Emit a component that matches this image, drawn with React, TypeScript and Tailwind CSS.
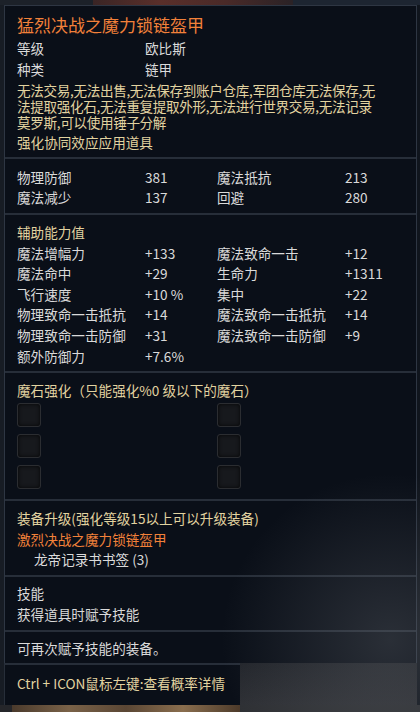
const stats = [
  ['物理防御', '381', '魔法抵抗', '213'],
  ['魔法减少', '137', '回避', '280'],
];

const bonus = [
  ['魔法增幅力', '+133', '魔法致命一击', '+12'],
  ['魔法命中', '+29', '生命力', '+1311'],
  ['飞行速度', '+10 %', '集中', '+22'],
  ['物理致命一击抵抗', '+14', '魔法致命一击抵抗', '+14'],
  ['物理致命一击防御', '+31', '魔法致命一击防御', '+9'],
  ['额外防御力', '+7.6%', '', ''],
];

const Row = ({ cells, lh }: { cells: string[]; lh: string }) => (
  <div className={`grid grid-cols-[128px_72px_128px_1fr] text-[#dadada] ${lh}`}>
    {cells.map((c, i) => (
      <span key={i} className="whitespace-nowrap">
        {c}
      </span>
    ))}
  </div>
);

const Slot = () => (
  <div className="w-6 h-6 rounded-[3px] bg-[#17191d] border border-[#2b2d31] shadow-[inset_0_0_4px_rgba(0,0,0,0.8)]" />
);

export default function App() {
  return (
    <div
      className="relative w-[420px] h-[712px] overflow-hidden bg-[#131820] flex flex-col text-[13.6px]"
      style={{ fontFamily: '"Noto Sans CJK SC", "Noto Sans", sans-serif' }}
    >
      {/* background peeking above the tooltip */}
      <div className="h-[5px] flex">
        <div className="w-[93px] bg-[#1c2129]" />
        <div className="w-[200px] bg-[linear-gradient(90deg,#3a2525,#5a2f2a,#4a2a28,#2a2226)]" />
        <div className="flex-1 bg-[#1d2531]" />
      </div>

      <div className="flex-1 flex">
        <div className="w-[4px] bg-[#171c24]" />
        <div className="w-[413px] flex flex-col">
          <div className="border-l border-t border-r border-[#2e3643] bg-[#0a0f18]">
            {/* header */}
            <div className="pl-[12px] pt-[8px] pb-[4px] border-b-2 border-[#272e39]">
              <div className="text-[17px] leading-[22px] text-[#f2813a]">猛烈决战之魔力锁链盔甲</div>
              <div className="mt-[2px] grid grid-cols-[128px_1fr] leading-[21px] text-[#dadada]">
                <span>等级</span>
                <span>欧比斯</span>
                <span>种类</span>
                <span>链甲</span>
              </div>
              <div className="mt-[2px] leading-[16px] tracking-[-0.35px] text-[#e2d3a0] whitespace-nowrap">
                <div>无法交易,无法出售,无法保存到账户仓库,军团仓库无法保存,无</div>
                <div>法提取强化石,无法重复提取外形,无法进行世界交易,无法记录</div>
                <div>莫罗斯,可以使用锤子分解</div>
              </div>
              <div className="mt-[2px] leading-[21px] text-[#e2d3a0]">强化协同效应应用道具</div>
            </div>

            {/* base stats */}
            <div className="pl-[12px] pt-[8px] pb-[6px] border-b-2 border-[#272e39]">
              {stats.map((r, i) => (
                <Row key={i} cells={r} lh="leading-[20px]" />
              ))}
            </div>

            {/* bonus stats */}
            <div className="pl-[12px] pt-[7px] pb-[5px] border-b-2 border-[#272e39]">
              <div className="leading-[20.6px] text-[#e2d3a0]">辅助能力值</div>
              {bonus.map((r, i) => (
                <Row key={i} cells={r} lh="leading-[20.6px]" />
              ))}
            </div>

            {/* manastones */}
            <div className="pl-[12px] pt-[7px] pb-[10px] border-b-2 border-[#272e39]">
              <div className="leading-[20px] text-[#e2d3a0]">魔石强化（只能强化%0 级以下的魔石）</div>
              <div className="mt-[3px] grid grid-cols-[200px_1fr] gap-y-[7px]">
                <Slot />
                <Slot />
                <Slot />
                <Slot />
                <Slot />
                <Slot />
              </div>
            </div>

            {/* upgrade */}
            <div className="pl-[12px] pt-[7px] pb-[5.5px] border-b-2 border-[#272e39] leading-[20.5px]">
              <div className="text-[#e2d3a0]">装备升级(强化等级15以上可以升级装备)</div>
              <div className="text-[#f2813a]">激烈决战之魔力锁链盔甲</div>
              <div className="pl-[17px] text-[#dadada]">龙帝记录书书签 (3)</div>
            </div>

            {/* skill */}
            <div className="pl-[12px] pt-[6px] pb-[5px] border-b-2 border-[#272e39] leading-[21px] text-[#dadada]">
              <div>技能</div>
              <div>获得道具时赋予技能</div>
            </div>

            <div className="pl-[12px] pt-[6px] pb-[5px] leading-[20px] text-[#dadada]">可再次赋予技能的装备。</div>
          </div>

          <div className="flex">
            <div className="w-[236px] border-l border-t-2 border-[#272e39] bg-[#0a0f18] pl-[12px] pt-[8px] pb-[12px] leading-[20px] text-[#e2d3a0] whitespace-nowrap">
              Ctrl + ICON鼠标左键:查看概率详情
            </div>
            <div className="flex-1 bg-[linear-gradient(180deg,#22252b,#2e3035)]" />
          </div>
        </div>
        <div className="flex-1 bg-[#10151d]" />
      </div>

      {/* background strip under the tooltip */}
      <div className="h-[7px] flex">
        <div className="w-[12px] bg-[#25262a]" />
        <div className="w-[228px] bg-[linear-gradient(90deg,#4a3a2c,#7a6248,#5a4634,#8a6e4e,#4c3a2a)]" />
        <div className="flex-1 bg-[#2e3034]" />
      </div>

      {/* blurred scene glowing through the lower right */}
      <div className="pointer-events-none absolute right-0 bottom-0 w-[200px] h-[240px] bg-[radial-gradient(ellipse_at_85%_70%,rgba(110,114,120,0.32),transparent_70%)]" />
    </div>
  );
}
